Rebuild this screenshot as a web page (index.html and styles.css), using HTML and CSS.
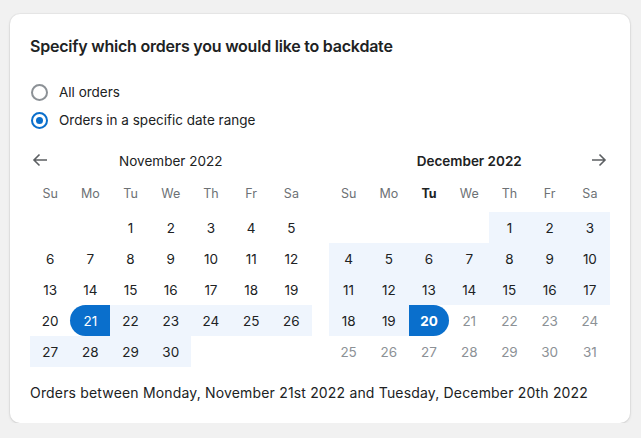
FILE: index.html
```html
<!DOCTYPE html>
<html lang="en">
<head>
<meta charset="utf-8">
<title>Backdate orders</title>
<link rel="stylesheet" href="styles.css">
</head>
<body>
<div class="card">
  <h2 class="title">Specify which orders you would like to backdate</h2>
  <div class="choices">
    <label class="choice"><span class="radio"></span><span>All orders</span></label>
    <label class="choice"><span class="radio checked"></span><span>Orders in a specific date range</span></label>
  </div>
  <div class="months">
    <div class="month">
      <div class="mhead">
        <button class="nav prev" aria-label="Previous month"><svg width="16" height="16" viewBox="0 0 16 16"><path d="M15 8H2M7.5 2.5L2 8l5.5 5.5" fill="none" stroke="#5c5f62" stroke-width="1.6"/></svg></button>
        <div class="mname">November 2022</div>
        <span></span>
      </div>
      <div class="grid">
        <div class="wd">Su</div><div class="wd">Mo</div><div class="wd">Tu</div><div class="wd">We</div><div class="wd">Th</div><div class="wd">Fr</div><div class="wd">Sa</div>
        <div></div><div></div><div class="d">1</div><div class="d">2</div><div class="d">3</div><div class="d">4</div><div class="d">5</div>
        <div class="d">6</div><div class="d">7</div><div class="d">8</div><div class="d">9</div><div class="d">10</div><div class="d">11</div><div class="d">12</div>
        <div class="d">13</div><div class="d">14</div><div class="d">15</div><div class="d">16</div><div class="d">17</div><div class="d">18</div><div class="d">19</div>
        <div class="d">20</div><div class="d start">21</div><div class="d in">22</div><div class="d in">23</div><div class="d in">24</div><div class="d in">25</div><div class="d in">26</div>
        <div class="d in">27</div><div class="d in">28</div><div class="d in">29</div><div class="d in">30</div>
      </div>
    </div>
    <div class="month">
      <div class="mhead">
        <span></span>
        <div class="mname bold">December 2022</div>
        <button class="nav next" aria-label="Next month"><svg width="16" height="16" viewBox="0 0 16 16"><path d="M1 8h13M8.5 2.5L14 8l-5.5 5.5" fill="none" stroke="#5c5f62" stroke-width="1.6"/></svg></button>
      </div>
      <div class="grid">
        <div class="wd">Su</div><div class="wd">Mo</div><div class="wd today">Tu</div><div class="wd">We</div><div class="wd">Th</div><div class="wd">Fr</div><div class="wd">Sa</div>
        <div></div><div></div><div></div><div></div><div class="d in">1</div><div class="d in">2</div><div class="d in">3</div>
        <div class="d in">4</div><div class="d in">5</div><div class="d in">6</div><div class="d in">7</div><div class="d in">8</div><div class="d in">9</div><div class="d in">10</div>
        <div class="d in">11</div><div class="d in">12</div><div class="d in">13</div><div class="d in">14</div><div class="d in">15</div><div class="d in">16</div><div class="d in">17</div>
        <div class="d in">18</div><div class="d in">19</div><div class="d end">20</div><div class="d off">21</div><div class="d off">22</div><div class="d off">23</div><div class="d off">24</div>
        <div class="d off">25</div><div class="d off">26</div><div class="d off">27</div><div class="d off">28</div><div class="d off">29</div><div class="d off">30</div><div class="d off">31</div>
      </div>
    </div>
  </div>
  <p class="summary">Orders between Monday, November 21st 2022 and Tuesday, December 20th 2022</p>
</div>
</body>
</html>
```
FILE: styles.css
```css
* { box-sizing: border-box; }
html, body { margin: 0; padding: 0; }
body {
  background: #f1f1f1;
  font-family: Inter, "Noto Sans", sans-serif;
  color: #202223;
  padding: 14px 11px 0 10px;
}
.card {
  background: #fff;
  border-radius: 10px;
  box-shadow: 0 0 0 1px rgba(0,0,0,0.03), 0 1px 3px rgba(0,0,0,0.12);
  padding: 20px 20px 20px 20px;
  height: 409px;
}
.title {
  margin: 0;
  font-size: 16px;
  line-height: 24px;
  font-weight: 600;
  letter-spacing: -0.22px;
}
.choices {
  display: flex;
  flex-direction: column;
  margin-top: 20px;
}
.choice {
  display: flex;
  align-items: center;
  gap: 11px;
  height: 28px;
  font-size: 13.5px;
  padding-left: 1px;
}
.radio {
  width: 17px;
  height: 17px;
  border-radius: 50%;
  border: 2px solid #8c9196;
  display: flex;
  align-items: center;
  justify-content: center;
}
.radio.checked { border-color: #0a6fcc; }
.radio.checked::after {
  content: "";
  width: 7px;
  height: 7px;
  border-radius: 50%;
  background: #0a6fcc;
}
.months {
  display: flex;
  gap: 17px;
  margin-top: 14px;
}
.month { flex: 1; }
.mhead {
  display: grid;
  grid-template-columns: 40px 1fr 40px;
  align-items: center;
  height: 26px;
}
.nav {
  border: 0;
  background: none;
  padding: 0;
  margin: 0;
  width: 16px;
  height: 16px;
  display: flex;
  cursor: pointer;
}
.prev { justify-self: start; margin-left: 2px; margin-top: -2px; }
.next { justify-self: end; margin-right: 3px; margin-top: -2px; }
.mname {
  text-align: center;
  font-size: 13.5px;
  color: #202223;
}
.mname.bold { font-weight: 600; }
.grid {
  display: grid;
  grid-template-columns: repeat(7, 1fr);
  grid-auto-rows: 31px;
  grid-template-rows: 38px;
}
.wd {
  display: flex;
  align-items: center;
  justify-content: center;
  font-size: 12.5px;
  color: #6d7175;
}
.wd.today { font-weight: 700; color: #202223; }
.d {
  display: flex;
  align-items: center;
  justify-content: center;
  font-size: 13.5px;
  color: #202223;
}
.d.in { background: #eff5fd; }
.d.start, .d.end { background: #0a6fcc; color: #fff; }
.d.start { border-radius: 16px 0 0 16px; }
.d.end { border-radius: 0 16px 16px 0; font-weight: 700; }
.d.off { color: #8c9196; }
.summary {
  margin: 16px 0 0 0;
  font-size: 14px;
  line-height: 20px;
  letter-spacing: 0.17px;
}
```
